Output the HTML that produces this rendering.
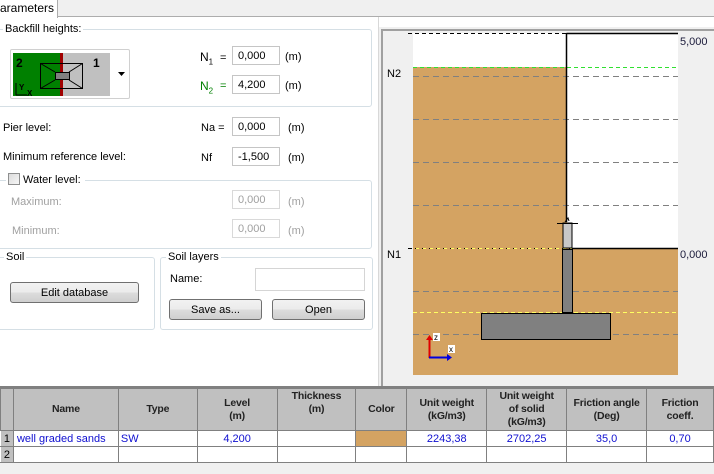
<!DOCTYPE html>
<html><head><style>
*{box-sizing:border-box;margin:0;padding:0}
body{width:714px;height:474px;overflow:hidden;background:#fff;font-family:"Liberation Sans",sans-serif;font-size:11px;color:#000;position:relative}
.a{position:absolute}
.gb{position:absolute;border:1px solid #d5dfe5;border-radius:3px}
.lg{position:absolute;background:#fff;padding:0 2px;font-size:11px}
.inp{position:absolute;width:48px;height:19px;border:1px solid #c5c5c5;background:#fff;font-size:11px;padding:3px 0 0 5px}
.dis{color:#a0a0a0;border-color:#d9d9d9}
.btn{position:absolute;border:1px solid #707070;border-radius:3px;background:linear-gradient(#f2f2f2,#ebebeb 50%,#dddddd 50%,#cfcfcf);text-align:center;font-size:11px;padding-top:4px}
table{position:absolute;left:0;top:388px;border-collapse:collapse;table-layout:fixed;font-size:11px}
td,th{border:1px solid #808080;overflow:hidden;white-space:nowrap}
th{background:#c0c0c0;font-weight:bold;font-size:10.5px;letter-spacing:-0.2px;height:42px;line-height:13px;text-align:center;color:#222}
td{height:16px;color:#1010d0;background:#fff}
td.rh{background:#c0c0c0;color:#000;text-align:center;border-color:#fff #808080 #808080 #fff}
</style></head><body>
<div class="a" style="left:0;top:0;width:714px;height:17px;background:#f0f0f0;border-bottom:1px solid #adadad"></div>
<div class="a" style="left:0;top:0;width:58px;height:18px;background:#fff;border-right:1px solid #adadad;padding:1px 0 0 0;font-size:12px">arameters</div>
<div class="a" style="left:378px;top:17px;width:1px;height:370px;background:#d8d8d8"></div>

<div class="gb" style="left:-3px;top:29px;width:375px;height:78px"></div>
<div class="lg" style="left:3px;top:23px">Backfill heights:</div>
<div class="a" style="left:10px;top:49px;width:120px;height:50px;border:1px solid #d0d0d0;border-radius:2px;background:#fff"></div>
<svg class="a" style="left:13px;top:53px" width="97" height="43">
<rect x="0" y="0" width="47" height="43" fill="#008000"/>
<rect x="50" y="0" width="47" height="43" fill="#c0c0c0"/>
<rect x="47" y="0" width="3" height="43" fill="#a00000"/>
<rect x="27.5" y="10.5" width="42" height="25" fill="none" stroke="#000"/>
<path d="M27.5 10.5 L42 19 M27.5 35.5 L42 27 M69.5 10.5 L56 19 M69.5 35.5 L56 27" stroke="#000" fill="none"/>
<rect x="42.5" y="19.5" width="14" height="7" fill="#808080" stroke="#000"/>
<text x="3" y="14" font-size="12" font-weight="bold" font-family="Liberation Sans">2</text>
<text x="80" y="14" font-size="12" font-weight="bold" font-family="Liberation Sans">1</text>
<path d="M3 42 V30 M3 42 H14" stroke="#000"/>
<text x="6" y="37" font-size="8" font-weight="bold">Y</text>
<text x="14" y="43" font-size="8" font-weight="bold">X</text>
</svg>
<svg class="a" style="left:118px;top:72px" width="8" height="5"><path d="M0 0H7L3.5 4Z" fill="#000"/></svg>
<div class="a" style="left:200px;top:50px;font-size:12px">N<sub style="font-size:8px">1</sub></div>
<div class="a" style="left:220px;top:52px">=</div>
<div class="inp" style="left:232px;top:46px">0,000</div><div class="a" style="left:285px;top:51px">(m)</div>
<div class="a" style="left:200px;top:79px;font-size:12px;color:#008000">N<sub style="font-size:8px">2</sub></div>
<div class="a" style="left:220px;top:80px;color:#008000">=</div>
<div class="inp" style="left:232px;top:75px">4,200</div><div class="a" style="left:285px;top:80px">(m)</div>

<div class="a" style="left:3px;top:122px">Pier level:</div>
<div class="a" style="left:201px;top:122px">Na =</div>
<div class="inp" style="left:232px;top:117px">0,000</div><div class="a" style="left:288px;top:122px">(m)</div>
<div class="a" style="left:3px;top:151px">Minimum reference level:</div>
<div class="a" style="left:201px;top:152px">Nf</div>
<div class="inp" style="left:232px;top:147px">-1,500</div><div class="a" style="left:288px;top:152px">(m)</div>

<div class="gb" style="left:-3px;top:180px;width:375px;height:69px"></div>
<div class="lg" style="left:6px;top:173px;padding-right:4px"><span style="display:inline-block;width:12px;height:12px;border:1px solid #8e8f8f;background:linear-gradient(135deg,#dcdcdc,#f6f6f6);vertical-align:-2px;margin-right:3px"></span>Water level:</div>
<div class="a" style="left:11px;top:196px;color:#a0a0a0">Maximum:</div>
<div class="inp dis" style="left:232px;top:190px">0,000</div><div class="a" style="left:288px;top:196px;color:#a0a0a0">(m)</div>
<div class="a" style="left:12px;top:225px;color:#a0a0a0">Minimum:</div>
<div class="inp dis" style="left:232px;top:219px">0,000</div><div class="a" style="left:288px;top:225px;color:#a0a0a0">(m)</div>

<div class="gb" style="left:-3px;top:257px;width:158px;height:73px"></div>
<div class="lg" style="left:4px;top:251px">Soil</div>
<div class="btn" style="left:10px;top:282px;width:129px;height:21px">Edit database</div>
<div class="gb" style="left:160px;top:257px;width:213px;height:73px"></div>
<div class="lg" style="left:166px;top:251px">Soil layers</div>
<div class="a" style="left:170px;top:273px">Name:</div>
<div class="a" style="left:255px;top:268px;width:110px;height:23px;border:1px solid #d5d5d5"></div>
<div class="btn" style="left:169px;top:299px;width:93px;height:21px">Save as...</div>
<div class="btn" style="left:272px;top:299px;width:93px;height:21px">Open</div>

<div class="a" style="left:379px;top:27px;width:335px;height:360px;background:#f0f0f0"></div>
<div class="a" style="left:381px;top:29px;width:333px;height:2px;background:#a0a0a0"></div>
<div class="a" style="left:381px;top:29px;width:2px;height:357px;background:#a0a0a0"></div>
<svg class="a" style="left:383px;top:31px" width="331" height="356">
<g transform="translate(-383,-31)">
<rect x="413" y="33" width="265" height="342" fill="#fff"/>
<rect x="413" y="67" width="154" height="181" fill="#d4a362"/>
<rect x="413" y="248" width="265" height="127" fill="#d4a362"/>
<g stroke="#808080" stroke-dasharray="6,4" stroke-width="1">
<path d="M413 76.5H678M413 119.5H678M413 162.5H678M413 205.5H678M413 291.5H678M413 334.5H678"/>
</g>
<path d="M408 33.5H678" stroke="#000" stroke-dasharray="4,3"/>
<path d="M413 67.5H678" stroke="#30e030" stroke-dasharray="4,3"/>
<path d="M408 248.5H678" stroke="#000" stroke-dasharray="4,3"/>
<path d="M413 248.5H678" stroke="#ffff60" stroke-dasharray="3,4" stroke-dashoffset="4"/>
<path d="M413 312.5H678" stroke="#ffff60" stroke-dasharray="4,3"/>
<path d="M566.5 33V222M566.5 33.5H678" stroke="#000" stroke-width="1.5"/>
<rect x="563" y="223" width="9" height="25" fill="#c8c8c8" stroke="#000"/>
<path d="M557 223.5H578M565 222l3-4 1 3" stroke="#000" fill="none"/>
<path d="M572 248.5H678" stroke="#000" stroke-width="1.5"/>
<rect x="562.5" y="249.5" width="10" height="63" fill="#808080" stroke="#000"/>
<rect x="481.5" y="313.5" width="129" height="26" fill="#808080" stroke="#000"/>
<path d="M429.5 358V337" stroke="#e00000" stroke-width="2"/>
<path d="M426 340l3.5-5 3.5 5z" fill="#e00000"/>
<path d="M429 357.5H450" stroke="#0000e0" stroke-width="2"/>
<path d="M447 354l5 3.5-5 3.5z" fill="#0000e0"/>
<rect x="433" y="333" width="7" height="8" fill="#fff"/><text x="434" y="340" font-size="8" font-family="Liberation Sans">z</text>
<rect x="448" y="345" width="7" height="8" fill="#fff"/><text x="449" y="352" font-size="8" font-family="Liberation Sans">x</text>
</g></svg>
<div class="a" style="left:387px;top:68px">N2</div>
<div class="a" style="left:387px;top:249px">N1</div>
<div class="a" style="left:680px;top:36px;color:#1a1a3a">5,000</div>
<div class="a" style="left:680px;top:249px;color:#1a1a3a">0,000</div>

<div class="a" style="left:0;top:386px;width:714px;height:88px;background:#f0f0f0;border-top:2px solid #808080"></div>
<table>
<colgroup><col style="width:13px"><col style="width:105px"><col style="width:79px"><col style="width:80px"><col style="width:79px"><col style="width:51px"><col style="width:80px"><col style="width:80px"><col style="width:80px"><col style="width:67px"></colgroup>
<tr><th></th><th>Name</th><th>Type</th><th>Level<br>(m)</th><th>Thickness<br>(m)<br>&nbsp;</th><th>Color</th><th>Unit weight<br>(kG/m3)</th><th>Unit weight<br>of solid<br>(kG/m3)</th><th>Friction angle<br>(Deg)</th><th>Friction<br>coeff.</th></tr>
<tr><td class="rh">1</td><td style="padding-left:3px">well graded sands</td><td style="padding-left:2px">SW</td><td style="text-align:center">4,200</td><td></td><td style="background:#d4a362"></td><td style="text-align:center">2243,38</td><td style="text-align:center">2702,25</td><td style="text-align:center">35,0</td><td style="text-align:center">0,70</td></tr>
<tr><td class="rh">2</td><td></td><td></td><td></td><td></td><td></td><td></td><td></td><td></td><td></td></tr>
</table>
</body></html>
